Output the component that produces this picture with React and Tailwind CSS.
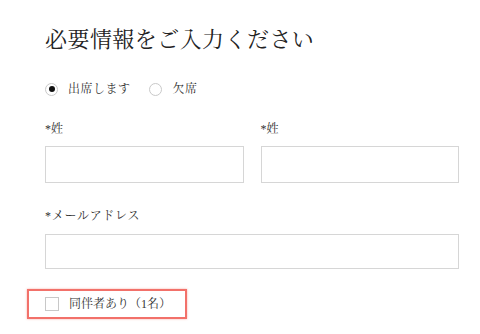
import React, { useState } from "react";

const font = {
  fontFamily:
    '"Liberation Serif", "Noto Serif CJK JP", "Noto Sans CJK JP", serif',
};

const Radio = ({ checked, label, onClick }) => (
  <button type="button" onClick={onClick} className="flex items-center gap-[10px]">
    <span className="w-[13px] h-[13px] rounded-full border border-[#c9c9c9] flex items-center justify-center bg-white">
      {checked && <span className="w-[6px] h-[6px] rounded-full bg-[#111]" />}
    </span>
    <span className="text-[12px] leading-[20px] tracking-[0.04em] text-[#333]">{label}</span>
  </button>
);

export default function App() {
  const [attend, setAttend] = useState(true);
  const [companion, setCompanion] = useState(false);

  return (
    <div className="w-[480px] h-[334px] bg-white overflow-hidden" style={font}>
      <div className="pl-[45px] pt-[28px] w-[459px]">
        <h1 className="text-[22px] leading-[24px] text-[#222] tracking-[0.02em]">
          必要情報をご入力ください
        </h1>

        {/* Attendance */}
        <div className="mt-[27px] h-[20px] flex items-center gap-[19px]">
          <Radio checked={attend} label="出席します" onClick={() => setAttend(true)} />
          <Radio checked={!attend} label="欠席" onClick={() => setAttend(false)} />
        </div>

        {/* Name */}
        <div className="mt-[22px] grid grid-cols-2 gap-x-[17px] w-[414px]">
          <div>
            <label className="block text-[12px] leading-[16px] text-[#333]">*姓</label>
            <input className="mt-[9px] block w-full h-[37px] border border-[#d6d6d6] outline-none px-2 text-sm" />
          </div>
          <div>
            <label className="block text-[12px] leading-[16px] text-[#333]">*姓</label>
            <input className="mt-[9px] block w-full h-[37px] border border-[#d6d6d6] outline-none px-2 text-sm" />
          </div>
        </div>

        {/* Email */}
        <div className="mt-[25px] w-[414px]">
          <label className="block text-[12px] leading-[16px] tracking-[0.06em] text-[#333]">
            *メールアドレス
          </label>
          <input
            type="email"
            className="mt-[10px] block w-full h-[35px] border border-[#d6d6d6] outline-none px-2 text-sm"
          />
        </div>

        {/* Companion */}
        <div className="mt-[20px] -ml-[18px] w-[160px] h-[30px] border-2 border-[#f2716a] shadow-[0_0_2px_rgba(242,113,106,0.6)] flex items-center pl-[16px] gap-[10px]">
          <button
            type="button"
            onClick={() => setCompanion(!companion)}
            className="w-[14px] h-[14px] border border-[#c8c8c8] bg-white flex items-center justify-center text-[10px]"
          >
            {companion ? "✓" : null}
          </button>
          <span className="text-[12px] leading-[16px] text-[#333]">同伴者あり（1名）</span>
        </div>
      </div>
    </div>
  );
}
